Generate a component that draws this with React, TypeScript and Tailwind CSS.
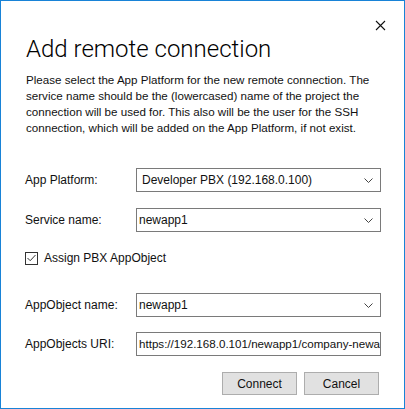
import React from 'react';

const font = { fontFamily: '"Segoe UI", "Liberation Sans", sans-serif' };

const Chevron = () => (
  <svg width="9" height="5" viewBox="0 0 9 5" className="shrink-0">
    <path d="M0.5 0.5 L4.5 4.5 L8.5 0.5" fill="none" stroke="#444" strokeWidth="1" />
  </svg>
);

const Combo: React.FC<{ value: string; padded?: boolean }> = ({ value, padded }) => (
  <div className="flex h-[24px] w-[245px] items-center border border-[#7a7a7a] bg-white pr-[7px]">
    <span className={`flex-1 truncate text-[12px] text-[#111] ${padded ? 'pl-[5px]' : 'pl-[2px]'}`}>{value}</span>
    <Chevron />
  </div>
);

const Row: React.FC<{ label: string; children: React.ReactNode; className?: string }> = ({ label, children, className }) => (
  <div className={`flex items-center ${className ?? ''}`}>
    <span className="w-[111px] text-[12px] text-[#111]">{label}</span>
    {children}
  </div>
);

export default function App() {
  return (
    <div
      className="flex h-[409px] w-[405px] flex-col border border-[#1883d7] bg-white text-[#111]"
      style={font}
    >
      <div className="flex justify-end pr-[18px] pt-[19px]">
        <svg width="11" height="11" viewBox="0 0 11 11">
          <path d="M1 1 L10 10 M10 1 L1 10" stroke="#111" strokeWidth="1.1" />
        </svg>
      </div>
      <h1
        className="mt-[2px] pl-[25px] text-[24px] font-light leading-[32px] text-black"
        style={{ fontFamily: 'Roboto, "Liberation Sans", sans-serif' }}
      >
        Add remote connection
      </h1>
      <p className="mt-[7px] pl-[25px] text-[11.6px] leading-[16px] text-[#111]">
        Please select the App Platform for the new remote connection. The
        <br />
        service name should be the (lowercased) name of the project the
        <br />
        connection will be used for. This also will be the user for the SSH
        <br />
        connection, which will be added on the App Platform, if not exist.
      </p>

      <div className="flex flex-col pl-[24px]">
        <Row label="App Platform:" className="mt-[32px]">
          <Combo value="Developer PBX (192.168.0.100)" padded />
        </Row>
        <Row label="Service name:" className="mt-[16px]">
          <Combo value="newapp1" />
        </Row>
        <label className="mt-[17px] flex items-center gap-[6px]">
          <span className="flex h-[13px] w-[13px] items-center justify-center border border-[#333] bg-white">
            <svg width="9" height="8" viewBox="0 0 9 8">
              <path d="M0.5 4 L3.2 6.7 L8.5 1" fill="none" stroke="#333" strokeWidth="1" />
            </svg>
          </span>
          <span className="text-[12px]">Assign PBX AppObject</span>
        </label>
        <Row label="AppObject name:" className="mt-[26px]">
          <Combo value="newapp1" />
        </Row>
        <Row label="AppObjects URI:" className="mt-[15px]">
          <div className="flex h-[24px] w-[245px] items-center overflow-hidden border border-[#7a7a7a] bg-white">
            <span className="whitespace-nowrap pl-[2px] text-[11.6px]">
              https://192.168.0.101/newapp1/company-newapp1
            </span>
          </div>
        </Row>
      </div>

      <div className="mt-[16px] flex justify-end gap-[7px] pr-[25px]">
        <button className="h-[23px] w-[75px] border border-[#adadad] bg-[#e1e1e1] text-[12px] text-[#111]">
          Connect
        </button>
        <button className="h-[23px] w-[75px] border border-[#adadad] bg-[#e1e1e1] text-[12px] text-[#111]">
          Cancel
        </button>
      </div>
    </div>
  );
}
